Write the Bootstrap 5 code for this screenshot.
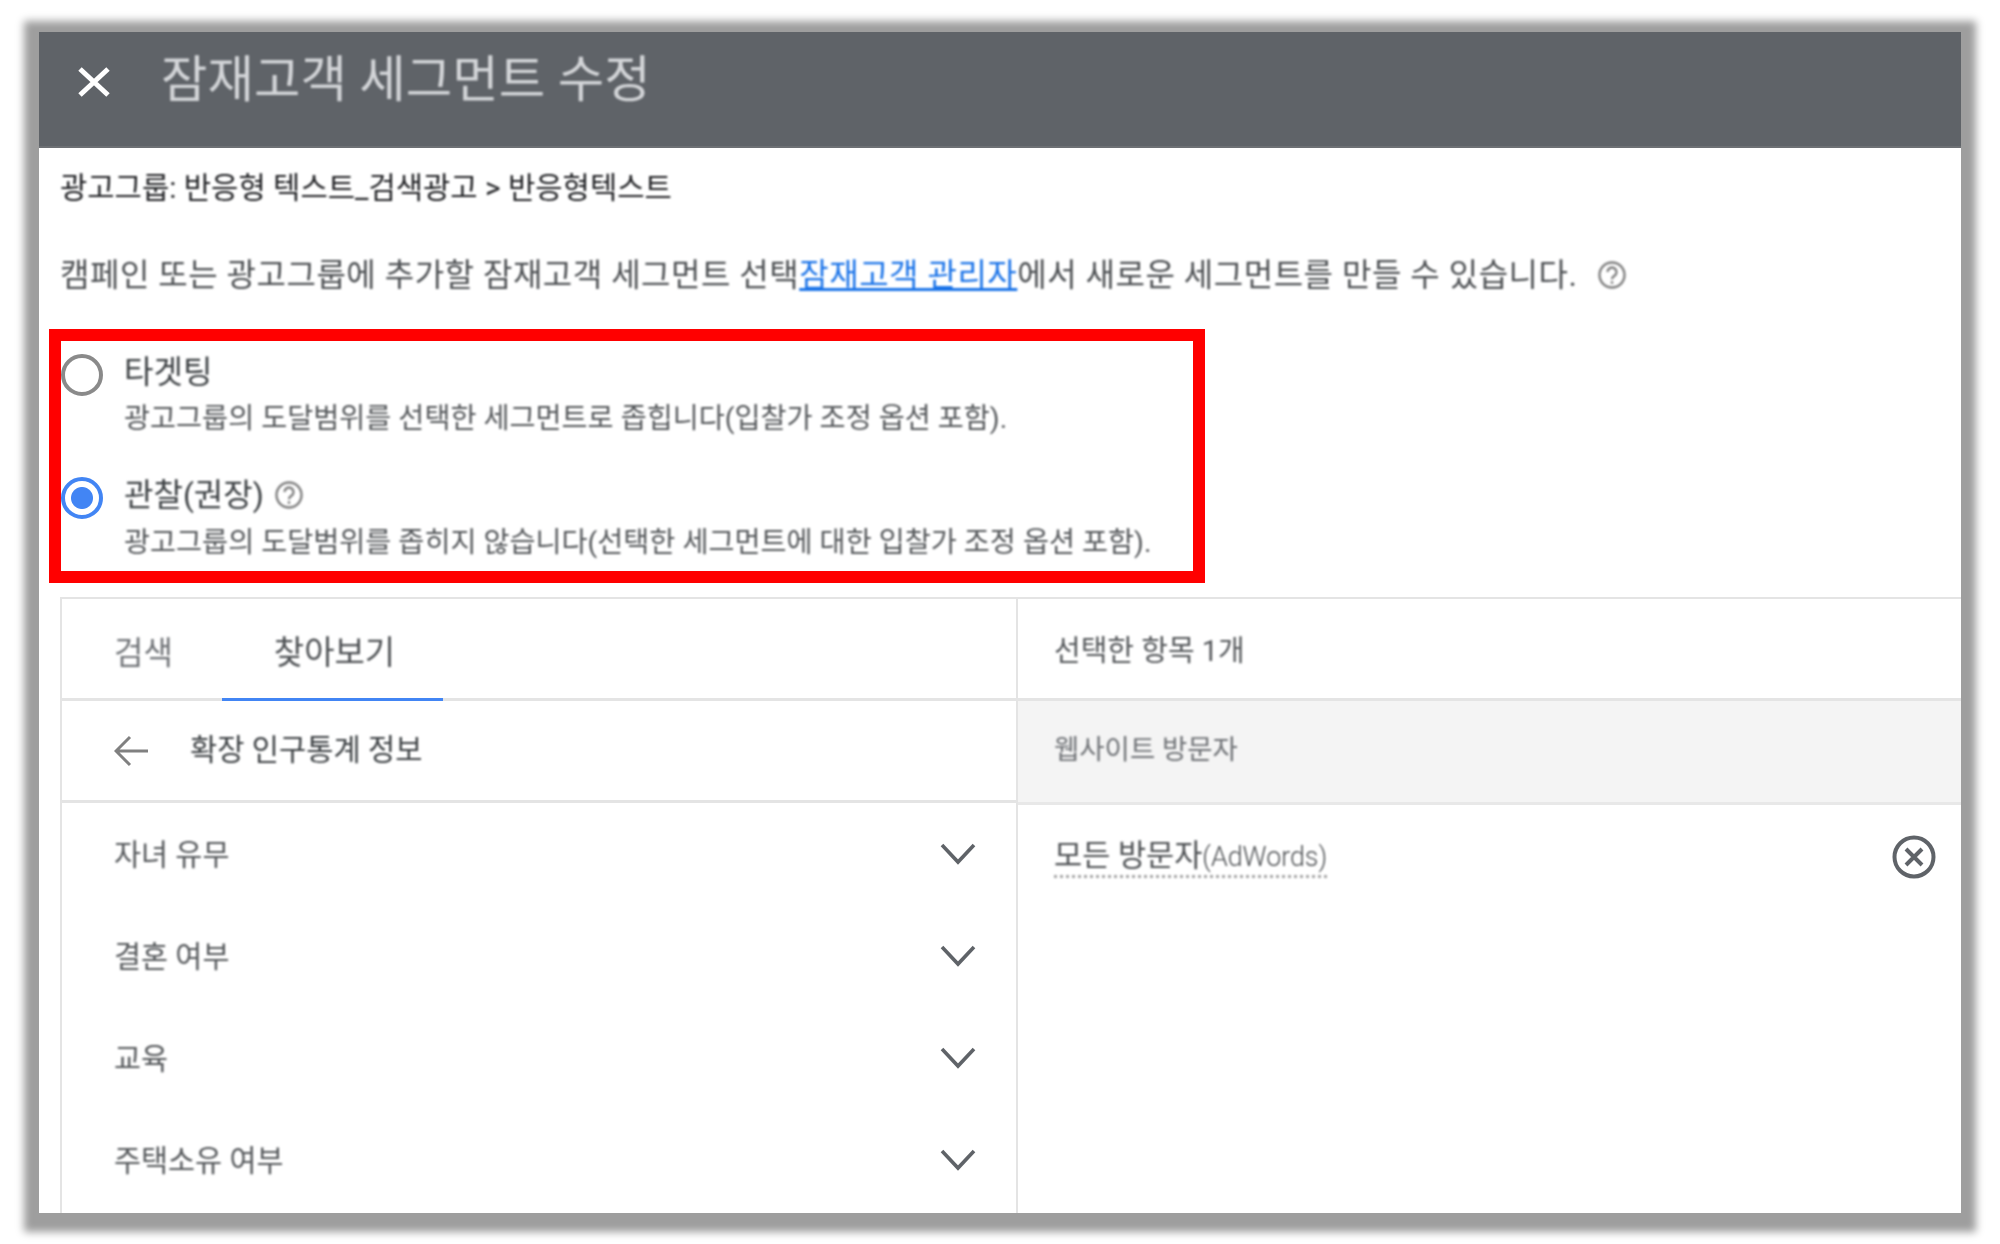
<!DOCTYPE html>
<html lang="ko">
<head>
  <meta charset="UTF-8">
  <meta name="viewport" content="width=device-width, initial-scale=1.0">
  <title>잠재고객 세그먼트 수정</title>
  <link href="https://cdn.jsdelivr.net/npm/bootstrap@5.3.0/dist/css/bootstrap.min.css" rel="stylesheet">
  <style>
    html, body { height: 100%; }
    body {
      background: #fff;
      font-family: Roboto, "Noto Sans CJK KR", "Liberation Sans", sans-serif;
      color: #3c4043;
      padding: 32px 39px 31px;
      overflow: hidden;
    }
    .seg-window {
      height: 1181px;
      background: #fff;
      box-shadow: 0 4px 8px 15px #9e9e9e;
      overflow: hidden;
    }
    .seg-head {
      height: 116px;
      background: #5f6368;
      padding: 0 0 16px 38px;
      gap: 50px;
      border-bottom: 2px solid #6d7074;
    }
    .seg-title {
      color: #d3d5d8;
      font-size: 50.5px;
      font-weight: 400;
      line-height: 1;
      margin: -1px 0 0;
      filter: blur(1px);
    }
    .seg-body { padding-left: 21px; }
    .soft { filter: blur(.9px); }
    .crumb {
      height: 40px;
      margin-top: 19.5px;
      font-size: 29.7px;
      line-height: 40px;
      color: #202124;
    }
    .intro {
      height: 40px;
      margin-top: 47.5px;
      font-size: 32px;
      letter-spacing: .5px;
      line-height: 40px;
      color: #4d5053;
      gap: 20px;
    }
    .intro a { color: #1a73e8; }
    .help-ico { flex: none; }
    .red-box {
      width: 1156px;
      height: 254px;
      margin: 34px 0 14px -11px;
      border: 12px solid #f00;
    }
    .opt-row { gap: 21px; }
    .opt-radio {
      width: 42px;
      height: 42px;
      margin: 0;
      flex: none;
      border: 4px solid #8a8a8a;
      background-color: #fff;
    }
    .opt-radio:checked {
      border-color: #4285f4;
      background: radial-gradient(circle, #4285f4 0 10.5px, #fff 11.5px);
    }
    .opt-one { padding-top: 9px; }
    .opt-two { padding-top: 36px; }
    .opt-text { padding-top: 1.5px; }
    .opt-label { height: 40px; font-size: 32px; line-height: 40px; gap: 10px; }
    .opt-desc { height: 36px; margin-top: 9.5px; font-size: 28.3px; line-height: 36px; color: #54575a; }
    .opt-two .opt-desc { margin-top: 10.5px; }
    .pick-panel {
      width: 1901px;
      height: 616px;
      border-top: 2px solid #e4e4e4;
    }
    .pick-left { width: 958px; border-left: 2px solid #e4e4e4; border-right: 2px solid #e4e4e4; }
    .pick-right { width: 943px; }
    .pick-tabs { height: 102px; border-bottom: 3px solid #e4e4e4; }
    .pick-tabs .nav-link {
      width: 160px;
      height: 102px;
      font-size: 32px;
      line-height: 108px;
      padding: 0 0 0 52px;
      color: #6f7276;
    }
    .pick-tabs .nav-link.active {
      width: 221px;
      padding: 0 0 0 4px;
      font-size: 33px;
      text-align: center;
      color: #4d5053;
      border-bottom: 3px solid #4285f4;
    }
    .pick-back {
      height: 102px;
      padding-left: 52px;
      gap: 42px;
      font-size: 29.6px;
      border-bottom: 3px solid #e4e4e4;
      color: #3c4043;
    }
    .pick-list { padding-top: 1px; }
    .pick-list .list-group-item {
      height: 102px;
      padding: 0 40px 0 52px;
      border: 0;
      font-size: 29.4px;
      color: #54575a;
      background: transparent;
    }
    .pick-list svg { margin-top: -2px; }
    .right-head { height: 102px; padding: 6px 0 0 36px; font-size: 29px; color: #54575a; border-bottom: 3px solid #e4e4e4; }
    .right-group { height: 104px; padding: 0 0 3px 36px; font-size: 27.5px; background: #f4f4f4; color: #6f7276; border-bottom: 3px solid #e8e8e8; }
    .right-item { height: 104px; padding: 2px 25px 0 36px; font-size: 30.6px; color: #4d5053; }
    .right-item svg { margin-top: -2px; }
    .dot-under { border-bottom: 3px dotted #a6a6a6; line-height: 36px; }
    .latin-part { font-size: 26.8px; font-weight: 300; }
  </style>
</head>
<body>
  <div class="seg-window d-flex flex-column">
    <header class="seg-head d-flex align-items-center flex-shrink-0">
      <svg width="34" height="34" viewBox="0 0 34 34" fill="none" stroke="#fff" stroke-width="5"><path d="M3 5 31 31M31 5 3 31"/></svg>
      <h1 class="seg-title">잠재고객 세그먼트 수정</h1>
    </header>

    <div class="seg-body flex-grow-1">
      <div class="crumb soft">광고그룹: 반응형 텍스트_검색광고 &gt; 반응형텍스트</div>
      <div class="intro d-flex align-items-center">
        <span class="soft">캠페인 또는 광고그룹에 추가할 잠재고객 세그먼트 선택<a href="#">잠재고객 관리자</a>에서 새로운 세그먼트를 만들 수 있습니다.</span>
        <svg class="help-ico soft" width="30" height="30" viewBox="0 0 30 30" fill="none" stroke="#808080" stroke-width="2.4"><circle cx="15" cy="15" r="12.5"/><path d="M10.5 12a4.5 4.5 0 1 1 6.8 3.9c-1.5.9-2.3 1.6-2.3 3.4"/><path d="M15 21.2v2.6"/></svg>
      </div>

      <div class="red-box">
        <div class="opt-one d-flex opt-row">
          <input class="form-check-input opt-radio mt-1" type="radio" name="seg-mode" aria-label="타겟팅">
          <div class="opt-text">
            <div class="opt-label soft">타겟팅</div>
            <div class="opt-desc soft">광고그룹의 도달범위를 선택한 세그먼트로 좁힙니다(입찰가 조정 옵션 포함).</div>
          </div>
        </div>
        <div class="opt-two d-flex opt-row">
          <input class="form-check-input opt-radio mt-1" type="radio" name="seg-mode" aria-label="관찰(권장)" checked>
          <div class="opt-text">
            <div class="opt-label d-flex align-items-center soft">관찰(권장)
              <svg class="help-ico" width="30" height="30" viewBox="0 0 30 30" fill="none" stroke="#808080" stroke-width="2.4"><circle cx="15" cy="15" r="12.5"/><path d="M10.5 12a4.5 4.5 0 1 1 6.8 3.9c-1.5.9-2.3 1.6-2.3 3.4"/><path d="M15 21.2v2.6"/></svg>
            </div>
            <div class="opt-desc soft">광고그룹의 도달범위를 좁히지 않습니다(선택한 세그먼트에 대한 입찰가 조정 옵션 포함).</div>
          </div>
        </div>
      </div>

      <div class="pick-panel d-flex">
        <div class="pick-left">
          <ul class="nav pick-tabs">
            <li class="nav-item"><a class="nav-link" href="#"><span class="soft d-inline-block">검색</span></a></li>
            <li class="nav-item"><a class="nav-link active" href="#"><span class="soft d-inline-block">찾아보기</span></a></li>
          </ul>
          <div class="pick-back d-flex align-items-center">
            <svg width="34" height="32" viewBox="0 0 34 32" fill="none" stroke="#808080" stroke-width="3"><path d="M34 16H3M16 2 2 16l14 14"/></svg>
            <span class="soft">확장 인구통계 정보</span>
          </div>
          <ul class="list-group list-group-flush pick-list">
            <li class="list-group-item d-flex align-items-center justify-content-between"><span class="soft">자녀 유무</span><svg width="36" height="22" viewBox="0 0 36 22" fill="none" stroke="#5f6368" stroke-width="3.6"><path d="M2 2l16 17L34 2"/></svg></li>
            <li class="list-group-item d-flex align-items-center justify-content-between"><span class="soft">결혼 여부</span><svg width="36" height="22" viewBox="0 0 36 22" fill="none" stroke="#5f6368" stroke-width="3.6"><path d="M2 2l16 17L34 2"/></svg></li>
            <li class="list-group-item d-flex align-items-center justify-content-between"><span class="soft">교육</span><svg width="36" height="22" viewBox="0 0 36 22" fill="none" stroke="#5f6368" stroke-width="3.6"><path d="M2 2l16 17L34 2"/></svg></li>
            <li class="list-group-item d-flex align-items-center justify-content-between"><span class="soft">주택소유 여부</span><svg width="36" height="22" viewBox="0 0 36 22" fill="none" stroke="#5f6368" stroke-width="3.6"><path d="M2 2l16 17L34 2"/></svg></li>
          </ul>
        </div>
        <div class="pick-right">
          <div class="right-head d-flex align-items-center"><span class="soft">선택한 항목 1개</span></div>
          <div class="right-group d-flex align-items-center"><span class="soft">웹사이트 방문자</span></div>
          <div class="right-item d-flex align-items-center justify-content-between">
            <span class="dot-under soft">모든 방문자<span class="latin-part">(AdWords)</span></span>
            <svg width="44" height="44" viewBox="0 0 44 44" fill="none" stroke="#5f6368" stroke-width="4"><circle cx="22" cy="22" r="19.5"/><path d="M14 14l16 16M30 14 14 30"/></svg>
          </div>
        </div>
      </div>
    </div>
  </div>

  <script src="https://cdn.jsdelivr.net/npm/bootstrap@5.3.0/dist/js/bootstrap.bundle.min.js"></script>
</body>
</html>
